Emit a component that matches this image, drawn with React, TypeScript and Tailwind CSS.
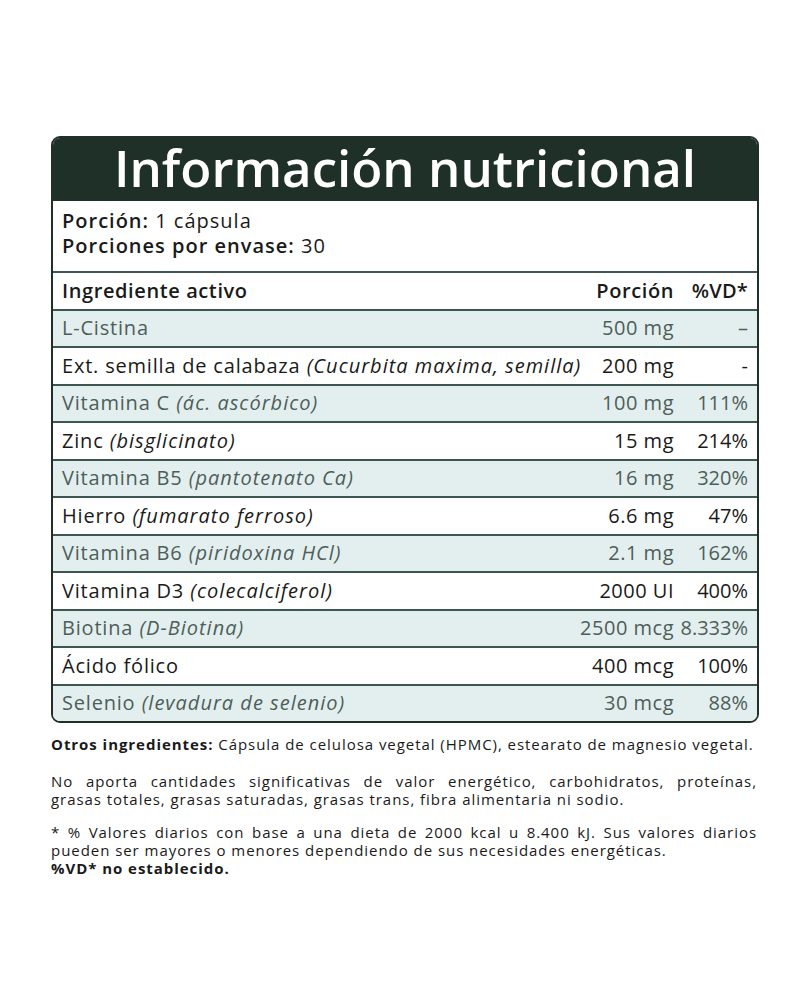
const rows = [
  { name: 'L-Cistina', note: '', dose: '500 mg', vd: '–' },
  { name: 'Ext. semilla de calabaza', note: '(Cucurbita maxima, semilla)', dose: '200 mg', vd: '-' },
  { name: 'Vitamina C', note: '(ác. ascórbico)', dose: '100 mg', vd: '111%' },
  { name: 'Zinc', note: '(bisglicinato)', dose: '15 mg', vd: '214%' },
  { name: 'Vitamina B5', note: '(pantotenato Ca)', dose: '16 mg', vd: '320%' },
  { name: 'Hierro', note: '(fumarato ferroso)', dose: '6.6 mg', vd: '47%' },
  { name: 'Vitamina B6', note: '(piridoxina HCl)', dose: '2.1 mg', vd: '162%' },
  { name: 'Vitamina D3', note: '(colecalciferol)', dose: '2000 UI', vd: '400%' },
  { name: 'Biotina', note: '(D-Biotina)', dose: '2500 mcg', vd: '8.333%' },
  { name: 'Ácido fólico', note: '', dose: '400 mcg', vd: '100%' },
  { name: 'Selenio', note: '(levadura de selenio)', dose: '30 mcg', vd: '88%' },
]

export default function App() {
  return (
    <div className="min-h-screen bg-white font-['Open_Sans',sans-serif]">
      <div className="pt-[136px] px-[51px]">
        {/* tabla */}
        <div className="w-[708px] border-2 border-[#1f3029] rounded-[9px]">
          <div className="h-[63px] bg-[#1f3029] rounded-t-[7px] flex justify-center">
            <h1 className="text-white text-[51px] font-semibold leading-[58px]">Información nutricional</h1>
          </div>
          <div className="h-[70px] px-[9px] pt-[7px] text-[20px] leading-[25px] tracking-[1px] text-[#1a1a1a]">
            <p><span className="font-semibold">Porción:</span> 1 cápsula</p>
            <p><span className="font-semibold">Porciones por envase:</span> 30</p>
          </div>
          <div className="h-[37.5px] border-t-2 border-[#3d5650] flex items-center px-[9px] text-[20px] tracking-[0.6px] font-semibold text-[#1a1a1a]">
            <span className="flex-1 min-w-0">Ingrediente activo</span>
            <span className="w-[90px] text-right">Porción</span>
            <span className="w-[74px] text-right tracking-[0.2px]">%VD*</span>
          </div>
          {rows.map((r, i) => {
            const tint = i % 2 === 0
            const last = i === rows.length - 1
            return (
              <div
                key={r.name}
                className={`h-[37.5px] border-t-2 border-[#3d5650] flex items-center px-[9px] text-[20px] font-medium ${
                  tint ? 'bg-[#e3eeee] text-[#4d5e59]' : 'bg-white text-[#1a1a1a]'
                } ${last ? 'rounded-b-[7px]' : ''}`}
              >
                <span className="flex-1 min-w-0 whitespace-nowrap tracking-[0.8px]">
                  {r.name}
                  {r.note && <i className="font-normal tracking-[1px]"> {r.note}</i>}
                </span>
                <span className="w-[100px] text-right whitespace-nowrap tracking-[0.5px]">{r.dose}</span>
                <span className="w-[74px] text-right whitespace-nowrap">{r.vd}</span>
              </div>
            )
          })}
        </div>

        {/* notas */}
        <div className="w-[706px] mt-[12px] text-[15px] leading-[18px] tracking-[0.95px] text-[#1a1a1a]">
          <p>
            <span className="font-bold">Otros ingredientes:</span> Cápsula de celulosa vegetal (HPMC), estearato de magnesio vegetal.
          </p>
          <div className="mt-[19px]">
            <p className="text-justify [text-align-last:justify] whitespace-nowrap">
              No aporta cantidades significativas de valor energético, carbohidratos, proteínas,
            </p>
            <p>grasas totales, grasas saturadas, grasas trans, fibra alimentaria ni sodio.</p>
          </div>
          <div className="mt-[15px]">
            <p className="text-justify [text-align-last:justify] whitespace-nowrap">
              * % Valores diarios con base a una dieta de 2000 kcal u 8.400 kJ. Sus valores diarios
            </p>
            <p>pueden ser mayores o menores dependiendo de sus necesidades energéticas.</p>
            <p className="font-bold">%VD* no establecido.</p>
          </div>
        </div>
      </div>
    </div>
  )
}
